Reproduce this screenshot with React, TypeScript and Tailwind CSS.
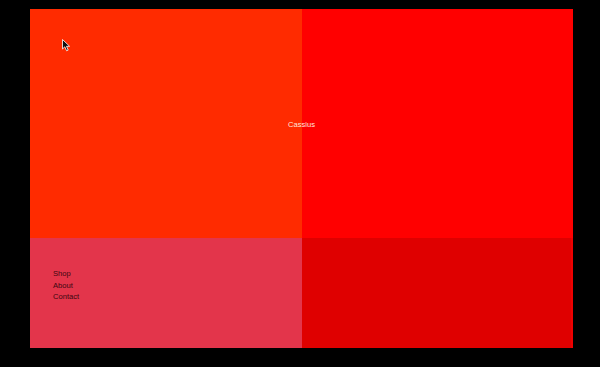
export default function App() {
  return (
    <div className="w-[600px] h-[367px] bg-black pt-[9px] pl-[30px] font-['Liberation_Sans',Arial,sans-serif]">
      <div className="relative grid w-[543px] h-[339px] grid-cols-[272px_271px] grid-rows-[229px_110px]">
        <div className="bg-[#ff2b00]" />
        <div className="bg-[#ff0000]" />
        <div className="bg-[#e3354b] pl-[23px] pt-[30px]">
          <nav className="flex flex-col text-[7.6px] leading-[11.5px] text-[#3b0710]">
            <a>Shop</a>
            <a>About</a>
            <a>Contact</a>
          </nav>
        </div>
        <div className="bg-[#df0000] border-r-[2px] border-[#ee0000]" />

        {/* site title sits across the split */}
        <span className="absolute left-[257px] top-[111px] w-[29px] text-center text-[7.6px] text-[#ffe4dc] leading-[10px]">
          Cassius
        </span>

        {/* mouse pointer */}
        <svg
          className="absolute left-[32px] top-[30px]"
          width="9"
          height="13"
          viewBox="0 0 9 13"
        >
          <path
            d="M0.5 0.5 L0.5 10 L2.8 7.8 L4.6 11.8 L6.2 11.1 L4.5 7.3 L7.6 7.3 Z"
            fill="#111"
            stroke="#fff"
            strokeWidth="0.8"
          />
        </svg>
      </div>
    </div>
  )
}
